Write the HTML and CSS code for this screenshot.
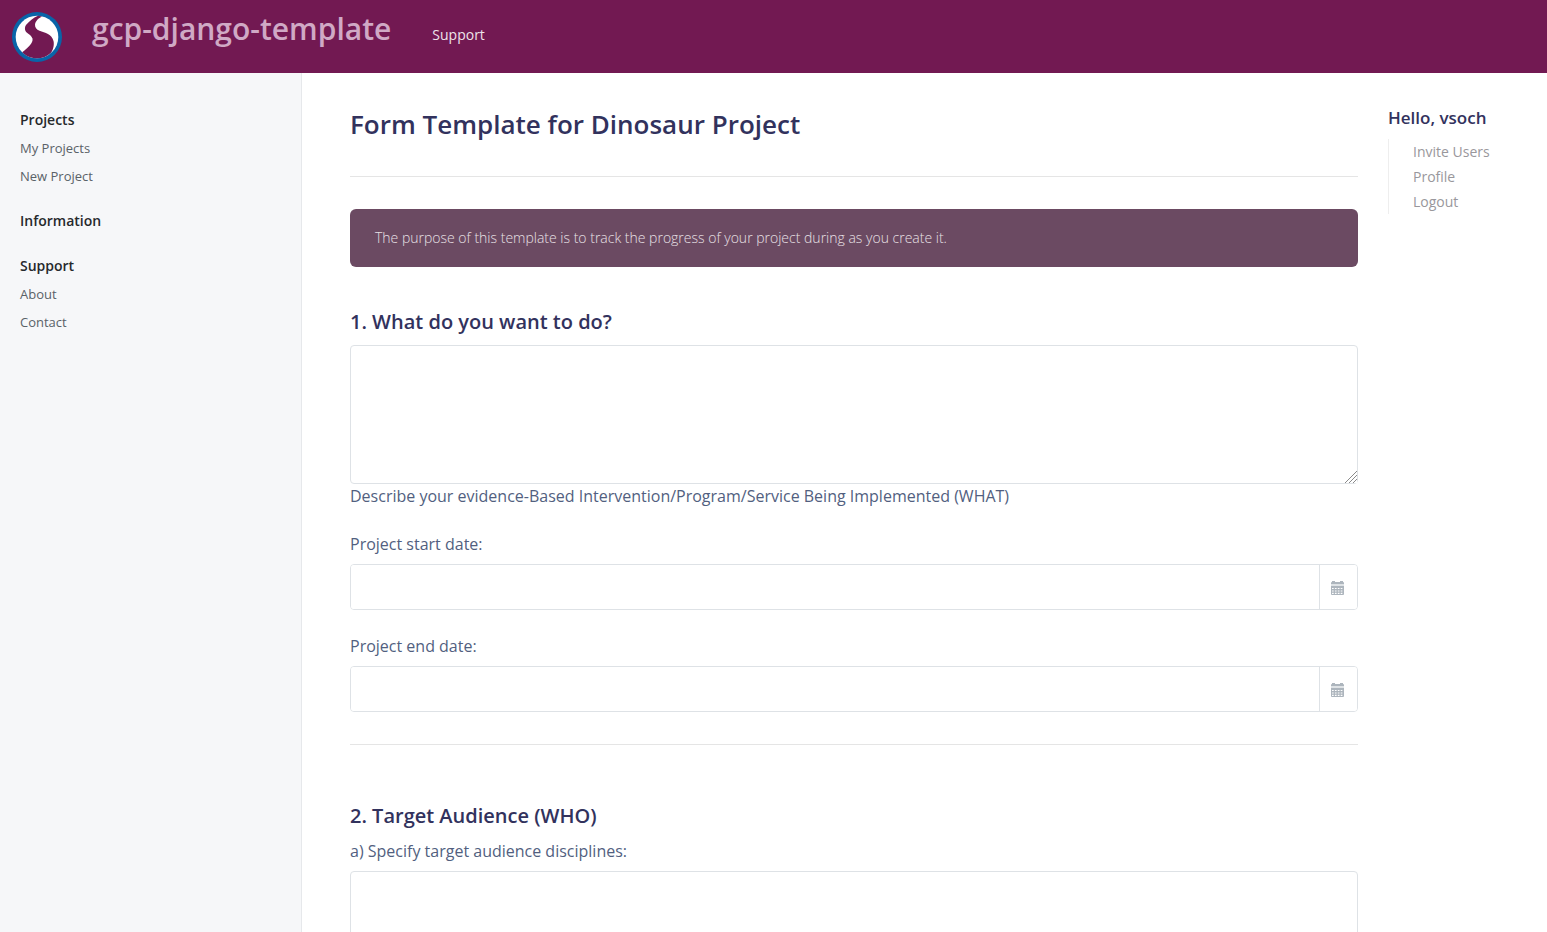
FILE: index.html
```html
<!DOCTYPE html>
<html lang="en">
<head>
<meta charset="utf-8">
<meta name="viewport" content="width=device-width, initial-scale=1">
<title>Form Template for Dinosaur Project</title>
<link rel="stylesheet" href="styles.css">
</head>
<body>
<header class="navbar">
  <a class="logo" href="#" aria-label="Home">
    <svg width="50" height="50" viewBox="0 0 50 50" aria-hidden="true">
      <circle cx="25" cy="25" r="25" fill="#0964a8"/>
      <circle cx="25" cy="25" r="21.3" fill="#fff"/>
      <path d="M26 3.800C21 5.500 17.500 9.500 14 13C12.600 15 12.800 17.500 13.500 19C15 21.500 19 22.500 20.500 26.500C21.500 31 15.500 36 10.200 40.300C15 45 20 46.300 25 46.300C30.500 46.300 35 44.500 38.700 41C41 38.500 42.500 33 41.500 29C40 22.500 33 20.500 27.500 18.800C24.500 17.500 22.800 15.500 23 12.500C23.500 9 26.500 6 30 4.400Z" fill="#721952"/>
    </svg>
  </a>
  <a class="brand" href="#">gcp-django-template</a>
  <nav><a class="nav-link" href="#">Support</a></nav>
</header>
<div class="layout">
  <nav class="sidebar" aria-label="Sections">
    <section class="group">
      <a class="group-title" href="#">Projects</a>
      <a class="group-link" href="#">My Projects</a>
      <a class="group-link" href="#">New Project</a>
    </section>
    <section class="group">
      <a class="group-title" href="#">Information</a>
    </section>
    <section class="group">
      <a class="group-title" href="#">Support</a>
      <a class="group-link" href="#">About</a>
      <a class="group-link" href="#">Contact</a>
    </section>
  </nav>
  <main class="content">
    <h1 class="title">Form Template for Dinosaur Project</h1>
    <hr class="rule">
    <div class="alert">The purpose of this template is to track the progress of your project during as you create it.</div>
    <form>
      <h2 class="question"><label for="what">1. What do you want to do?</label></h2>
      <textarea class="box" id="what" rows="5"></textarea>
      <p class="text">Describe your evidence-Based Intervention/Program/Service Being Implemented (WHAT)</p>
      <div class="field">
        <label class="text" for="start">Project start date:</label>
        <div class="date">
          <input class="date-input" id="start" type="text">
          <button class="date-button" type="button" aria-label="Pick start date">
            <svg width="14" height="14" viewBox="0 0 14 14" aria-hidden="true"><use href="#calendar"/></svg>
          </button>
        </div>
      </div>
      <div class="field">
        <label class="text" for="end">Project end date:</label>
        <div class="date">
          <input class="date-input" id="end" type="text">
          <button class="date-button" type="button" aria-label="Pick end date">
            <svg width="14" height="14" viewBox="0 0 14 14" aria-hidden="true">
              <g id="calendar">
                <path d="M0 3V2Q0 1 1 1V0H4V1H9V0H12V1Q13 1 13 2V3Z" fill="#adb5bd"/>
                <path d="M0 3H13V5H0Z" fill="#dfe3e6"/>
                <path d="M0 5H13V13Q13 14 12 14H1Q0 14 0 13Z" fill="#adb5bd"/>
                <path d="M1 7.500H12M1 10H12M1 12.400H12" stroke="#fff" stroke-width="1.200" stroke-dasharray="1.700 1.200" fill="none"/>
              </g>
            </svg>
          </button>
        </div>
      </div>
      <hr class="rule">
      <h2 class="question second">2. Target Audience (WHO)</h2>
      <div class="field-flush">
        <label class="text" for="who">a) Specify target audience disciplines:</label>
        <textarea class="box" id="who" rows="5"></textarea>
      </div>
    </form>
  </main>
  <aside class="account">
    <h2 class="hello">Hello, vsoch</h2>
    <nav class="account-links" aria-label="Account">
      <a href="#">Invite Users</a>
      <a href="#">Profile</a>
      <a href="#">Logout</a>
    </nav>
  </aside>
</div>
</body>
</html>
```
FILE: styles.css
```css
* { box-sizing: border-box; }
body {
  margin: 0;
  height: 100vh;
  display: flex;
  flex-direction: column;
  font-family: "Open Sans", sans-serif;
  font-size: 16px;
  line-height: 24px;
  color: #525f7f;
  background: #fff;
}
a { text-decoration: none; }
h1, h2, p { margin: 0; }
.navbar {
  flex: none;
  display: flex;
  align-items: center;
  padding: 8px 12px;
  background: #721952;
}
.logo { display: flex; padding: 4px 0 3px; }
.brand {
  margin-left: 30px;
  padding-bottom: 16px;
  font-size: 30px;
  line-height: 40px;
  font-weight: 600;
  color: #d0a9c5;
}
.nav-link {
  display: block;
  margin-left: 41px;
  padding-bottom: 4px;
  font-size: 14px;
  color: #eee3ea;
}
.layout {
  flex: 1;
  min-height: 0;
  display: flex;
  overflow-y: auto;
  scrollbar-width: none;
}
.sidebar {
  flex: none;
  position: sticky;
  top: 0;
  width: 302px;
  padding: 36px 20px;
  background: #f6f7f9;
  border-right: 1px solid #e6e8eb;
}
.group { margin-bottom: 20px; }
.group-title, .group-link { display: block; }
.group-title {
  font-size: 14px;
  line-height: 21px;
  font-weight: 600;
  padding-bottom: 4px;
  color: #26292c;
}
.group-link {
  font-size: 13px;
  line-height: 20px;
  padding: 4px 0;
  color: #5a6268;
}
.content {
  flex: 1;
  min-width: 0;
  padding: 32px 30px 48px 48px;
  height: max-content;
}
.title {
  font-size: 26px;
  line-height: 39px;
  font-weight: 600;
  color: #32325d;
}
.rule {
  margin: 32px 0;
  border: 0;
  border-top: 1px solid #e5e5e5;
}
.alert {
  padding: 16px 25px;
  border-radius: 6px;
  margin-bottom: 40px;
  font-size: 14px;
  line-height: 26px;
  font-weight: 300;
  color: #e8e0e5;
  background: #6b4a62;
}
.question {
  margin-bottom: 8px;
  font-size: 20px;
  line-height: 30px;
  font-weight: 600;
  color: #32325d;
}
.second { margin-top: 56px; }
.box {
  display: block;
  width: 100%;
  height: 139px;
  padding: 10px 12px;
  border: 1px solid #dee2e6;
  border-radius: 4px;
  font: inherit;
  color: inherit;
  background: #fff;
  resize: vertical;
}
.box::-webkit-resizer {
  background:
    linear-gradient(135deg, #fff 58%, transparent 58%),
    repeating-linear-gradient(135deg, #8a8a8a 0 1px, #fff 1px 3px);
}
.text { display: block; }
.field { margin-top: 24px; }
.field .text, .field-flush .text { margin-bottom: 8px; }
.date {
  display: flex;
  height: 46px;
  border: 1px solid #dee2e6;
  border-radius: 4px;
  overflow: hidden;
}
.date-input {
  flex: 1;
  min-width: 0;
  padding: 10px 12px;
  border: 0;
  font: inherit;
  color: inherit;
  background: #fff;
}
.date-button {
  width: 38px;
  padding: 4px 1px 0 0;
  border: 0;
  border-left: 1px solid #dee2e6;
  background: #fff;
}
.account {
  flex: none;
  width: 159px;
  padding-top: 32px;
}
.hello {
  font-size: 17px;
  line-height: 26px;
  font-weight: 600;
  color: #32325d;
}
.account-links {
  margin-top: 8px;
  padding-left: 24px;
  border-left: 1px solid #eee;
}
.account-links a {
  display: block;
  font-size: 14px;
  line-height: 25px;
  color: #99979c;
}
```
